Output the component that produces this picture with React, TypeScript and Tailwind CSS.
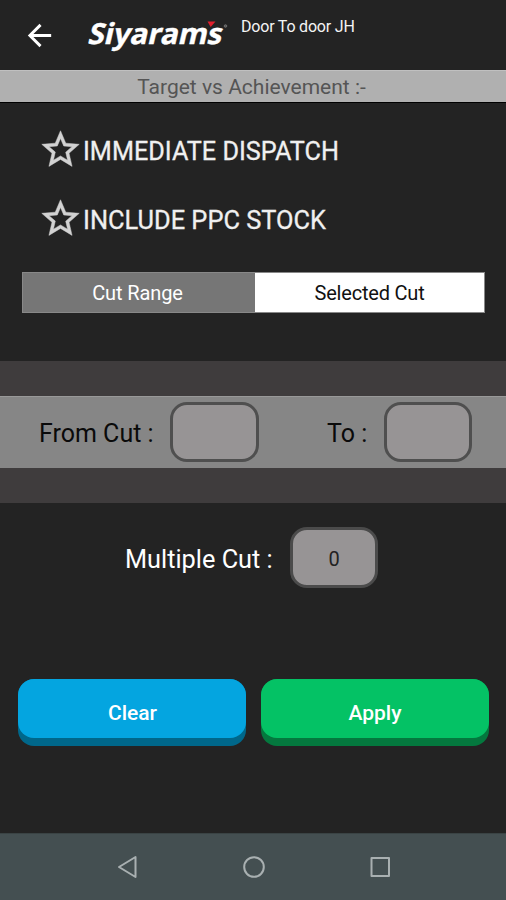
import React, { useState } from "react";

interface ToggleRowProps {
  label: string;
  width: string;
}

const StarToggle = ({ label, width }: ToggleRowProps) => {
  return (
    <button type="button" className="flex h-[69px] items-center pl-[38px] text-left">
      <svg className="h-[45px] w-[45px] shrink-0" viewBox="0 0 24 24" fill="#d2d2d2" stroke="#d2d2d2" strokeWidth="0.25" aria-hidden="true">
        <path d="M22 9.24l-7.19-.62L12 2 9.19 8.63 2 9.24l5.46 4.73L5.82 21 12 17.27 18.18 21l-1.63-7.03L22 9.24zM12 15.4l-3.76 2.27 1-4.28-3.32-2.88 4.38-.38L12 6.1l1.71 4.04 4.38.38-3.32 2.88 1 4.28L12 15.4z" />
      </svg>
      <svg className="h-[40px] w-[270px] overflow-visible" aria-label={label}>
        <text x="0" y="30" textLength={width} lengthAdjust="spacingAndGlyphs" fontSize="26" fill="#f0f0f0" stroke="#f0f0f0" strokeWidth="0.3">
          {label}
        </text>
      </svg>
    </button>
  );
};

const Logo = () => {
  return (
    <svg className="ml-[26px] mt-[14px] h-[42px] w-[150px] shrink-0 overflow-visible" viewBox="0 0 150 42" aria-label="Siyarams">
      <g transform="translate(4 30) skewX(-13)">
        <text
          x="0"
          y="0"
          textLength="134"
          lengthAdjust="spacingAndGlyphs"
          className="font-['Noto_Sans','Open_Sans',sans-serif] font-bold"
          fontSize="29"
          fill="#fff"
          stroke="#fff"
          strokeWidth="0.4"
        >
          Siyarams
        </text>
      </g>
      <path d="M124.500 7.500h8l-4.800 5.500z" fill="#e01f2d" />
      <circle cx="142.500" cy="12" r="1.3" fill="#555" stroke="#777" strokeWidth="0.8" />
    </svg>
  );
};

const App = () => {
  const [tab, setTab] = useState("selected");

  return (
    <div className="flex h-[900px] w-[506px] flex-col overflow-hidden bg-[#232323] font-[Roboto,sans-serif] text-white">
      {/* Header */}
      <header className="flex h-[70px] shrink-0 items-start pl-[22px]">
        <button type="button" className="mt-[18px]" aria-label="Back">
          <svg className="h-[35px] w-[35px]" viewBox="0 0 24 24" fill="#fff">
            <path d="M20 11H7.83l5.59-5.59L12 4l-8 8 8 8 1.41-1.41L7.83 13H20v-2z" />
          </svg>
        </button>
        <Logo />
        <span className="ml-[8px] mt-[15px] whitespace-nowrap text-[16px] leading-6 tracking-[-0.2px] text-[#f4f4f4]">
          Door To door JH
        </span>
      </header>

      <div className="h-[33px] shrink-0 border-b border-t border-b-black border-t-[#c0c0c0] bg-[#b0b0b0] pr-[3px] text-center text-[21px] leading-[33px] text-[#555]">
        Target vs Achievement :-
      </div>

      <div className="mt-[12px] flex flex-col">
        <StarToggle label="IMMEDIATE DISPATCH" width="256" />
        <StarToggle label="INCLUDE PPC STOCK" width="243" />
      </div>

      {/* Tabs */}
      <div className="ml-[22px] mr-[21px] mt-[19px] flex h-[41px] shrink-0 border border-[#888] text-[20px]">
        <button type="button" className="w-[232px] bg-[#767676] pr-[3px] tracking-[-0.1px] text-white" onClick={() => setTab("range")}>
          Cut Range
        </button>
        <button type="button" className="flex-1 bg-white tracking-[-0.2px] text-[#111]" onClick={() => setTab("selected")}>
          Selected Cut
        </button>
      </div>

      <div className="mt-[48px] h-[142px] shrink-0 bg-[#3f3c3d] pt-[35px]">
        <div className="flex h-[72px] items-center border-t border-[#999] bg-[#868686] pb-[2px] text-[25px] text-[#0a0a0a]">
          <label className="w-[131px] whitespace-nowrap pl-[39px] pt-[4px]">From Cut :</label>
          <div className="ml-[39px] h-[60px] w-[89px] rounded-[17px] border-[3px] border-[#4f4f4f] bg-[#979495]" />
          <label className="ml-[68px] w-[57px] whitespace-nowrap pt-[4px]">To :</label>
          <div className="h-[60px] w-[88px] rounded-[17px] border-[3px] border-[#4f4f4f] bg-[#979495]" />
        </div>
      </div>

      <div className="mt-[24px] flex h-[61px] shrink-0 items-center pl-[125px]">
        <label className="w-[165px] whitespace-nowrap pt-[4px] text-[25.3px]">Multiple Cut :</label>
        <div className="flex h-[61px] w-[88px] items-center justify-center rounded-[17px] border-[3px] border-[#4b4b4b] bg-[#979495] pt-[3px] text-[20px] text-[#222]">
          0
        </div>
      </div>

      {/* Actions */}
      <div className="mt-[91px] flex shrink-0 gap-[15px] pl-[18px] text-[21px] font-medium">
        <button type="button" className="flex h-[67px] w-[228px] items-start rounded-[16px] bg-[#00678a]">
          <span className="flex h-[59px] w-full items-center justify-center rounded-[16px] bg-[#04a5e0] pl-px pt-[11px]">Clear</span>
        </button>
        <button type="button" className="flex h-[67px] w-[228px] items-start rounded-[16px] bg-[#04783e]">
          <span className="flex h-[59px] w-full items-center justify-center rounded-[16px] bg-[#04c265] pt-[11px]">Apply</span>
        </button>
      </div>

      {/* System navigation */}
      <nav className="mt-auto flex h-[67px] shrink-0 items-center justify-between border-t border-[#3a4344] bg-[#444f51] pl-[115px] pr-[114px]">
        <svg className="h-[24px] w-[24px]" viewBox="0 0 24 24" fill="none" stroke="#a9b0b1" strokeWidth="2" strokeLinejoin="round">
          <path d="M20.5 2v20L4 12z" />
        </svg>
        <svg className="h-[24px] w-[24px]" viewBox="0 0 24 24" fill="none" stroke="#a9b0b1" strokeWidth="2">
          <circle cx="12" cy="12" r="9.8" />
        </svg>
        <svg className="h-[24px] w-[24px]" viewBox="0 0 24 24" fill="none" stroke="#a9b0b1" strokeWidth="2" strokeLinejoin="round">
          <path d="M3.500 3h17.500v18H3.500z" />
        </svg>
      </nav>
    </div>
  );
};

export default App;
